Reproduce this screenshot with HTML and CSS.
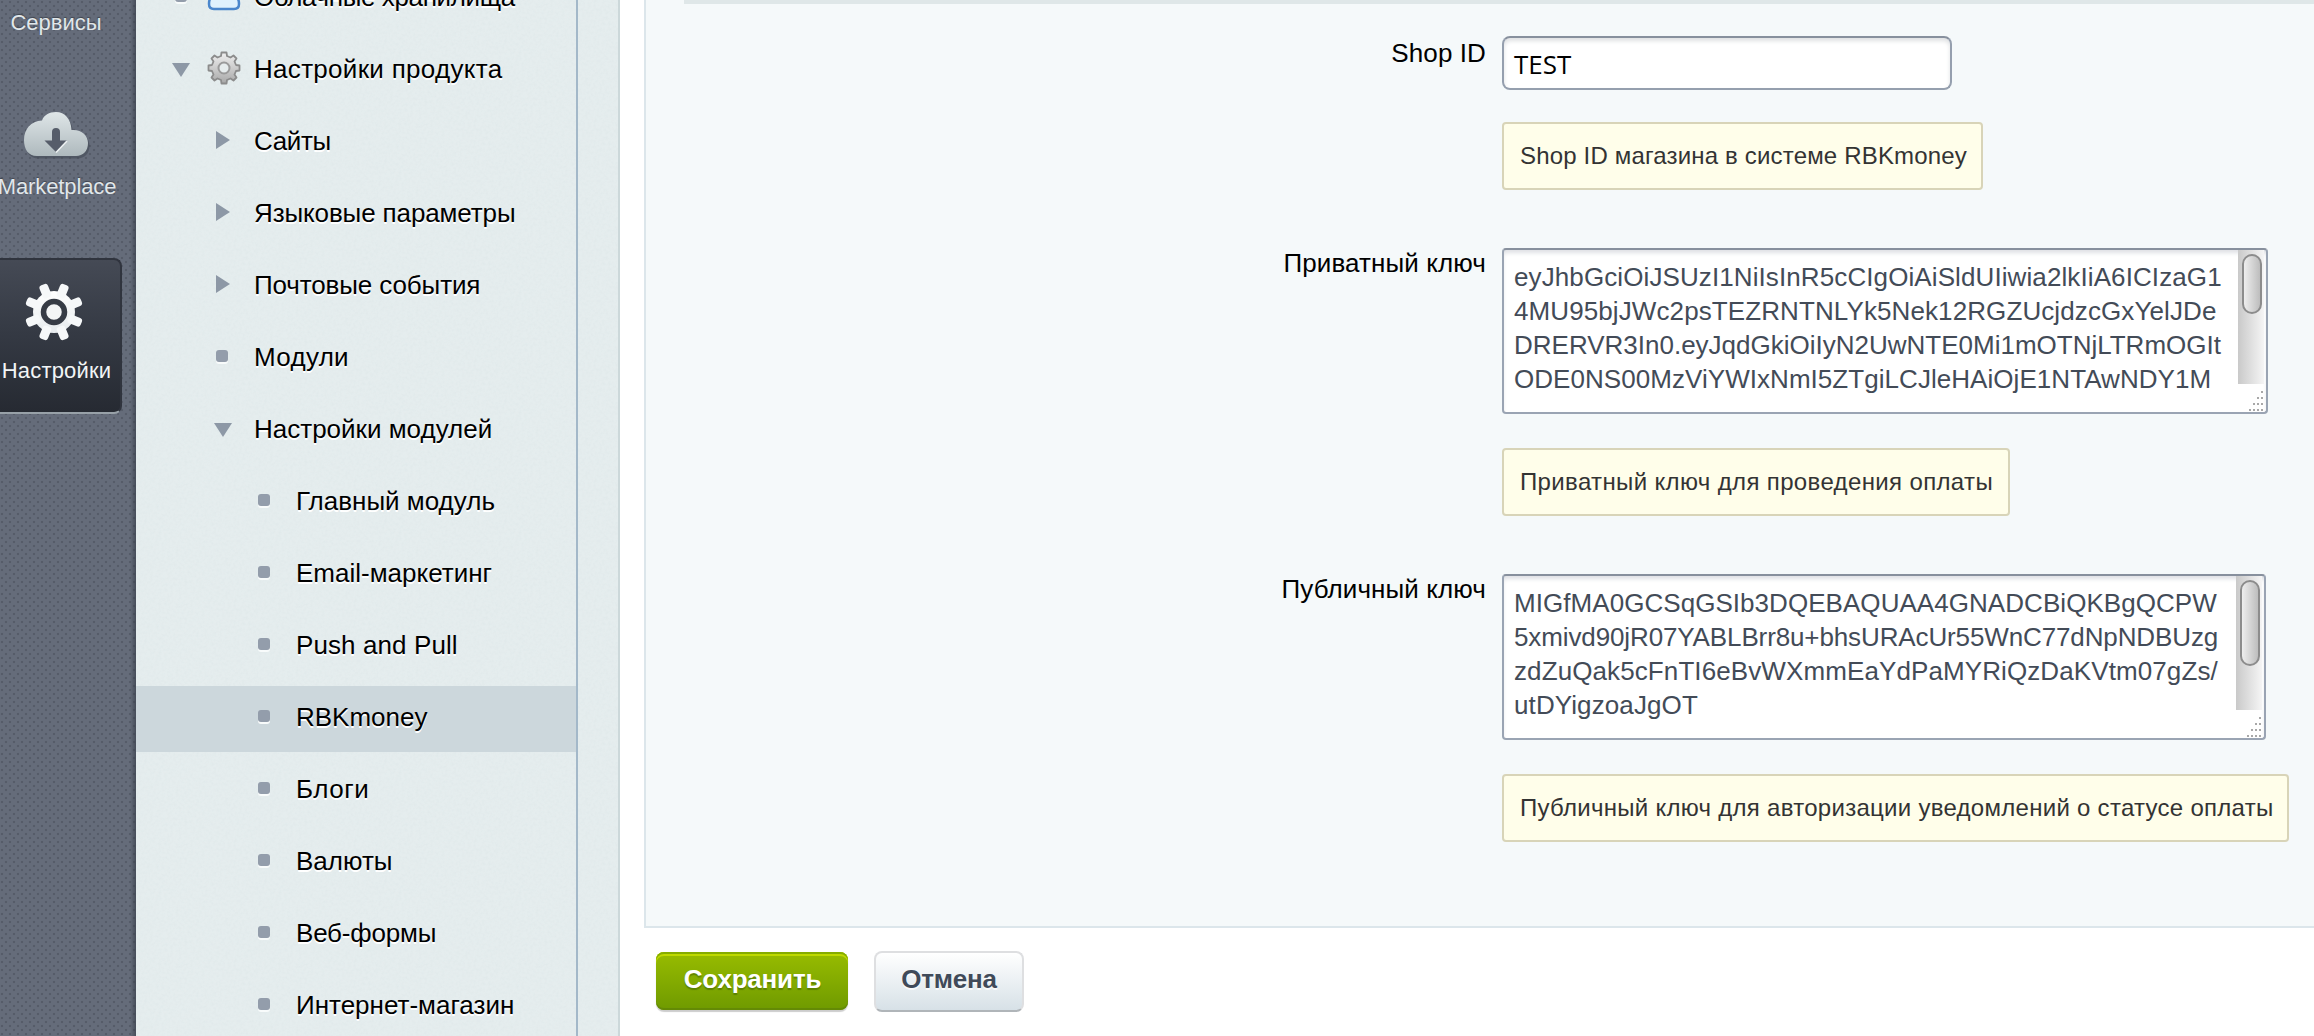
FILE: index.html
```html
<!DOCTYPE html>
<html lang="ru">
<head>
<meta charset="utf-8">
<title>RBKmoney</title>
<link rel="stylesheet" href="styles.css">
</head>
<body>
<svg class="defs" width="0" height="0" aria-hidden="true">
  <defs>
    <linearGradient id="cloudFill" x1="0" y1="0" x2="0" y2="1"><stop offset="0" stop-color="#dfe6e8"/><stop offset="1" stop-color="#aeb9bd"/></linearGradient>
    <linearGradient id="gearFill" x1="0" y1="0" x2="0" y2="1"><stop offset="0" stop-color="#ffffff"/><stop offset="1" stop-color="#e6eaed"/></linearGradient>
    <linearGradient id="grayGear" x1="0" y1="0" x2="0" y2="1"><stop offset="0" stop-color="#f0f0f0"/><stop offset="1" stop-color="#a8a8a8"/></linearGradient>
  </defs>
</svg>

<nav class="rail">
  <a class="rail-item services">Сервисы</a>
  <a class="rail-item market">
    <svg width="68" height="50" viewBox="0 0 68 50">
      <path d="M14 46C5 46 1 39 1 30C1 19 8 11 19 10.500C21 5 26 2 33 2C42 2 48 9 48.500 20C58 19 65 25 65 33C65 41 60 46 53 46Z" fill="#434955" opacity=".6" transform="translate(1.500 1.500)"/>
      <path d="M14 45C5 45 1 38 1 29C1 18 8 10 19 9.500C21 4 26 1 33 1C42 1 48 8 48.500 19C58 18 65 24 65 32C65 40 60 45 53 45Z" fill="url(#cloudFill)"/>
      <path d="M29 21Q29 17 33 17Q37 17 37 21V29.500H44L33 41L21.500 29.500H29Z" fill="#565d6a"/>
      <path d="M44 30L33 41.500" stroke="#eef2f3" stroke-width="1.500"/>
    </svg>
    Marketplace
  </a>
  <a class="rail-item settings active">
    <svg width="60" height="60" viewBox="-30 -30 60 60">
      <g fill="url(#gearFill)">
        <circle r="21"/>
        <g fill="#f6f8f9">
          <rect x="-4.500" y="-29.500" width="9" height="14" rx="3" transform="rotate(22.500)"/>
          <rect x="-4.500" y="-29.500" width="9" height="14" rx="3" transform="rotate(67.500)"/>
          <rect x="-4.500" y="-29.500" width="9" height="14" rx="3" transform="rotate(112.500)"/>
          <rect x="-4.500" y="-29.500" width="9" height="14" rx="3" transform="rotate(157.500)"/>
          <rect x="-4.500" y="-29.500" width="9" height="14" rx="3" transform="rotate(202.500)"/>
          <rect x="-4.500" y="-29.500" width="9" height="14" rx="3" transform="rotate(247.500)"/>
          <rect x="-4.500" y="-29.500" width="9" height="14" rx="3" transform="rotate(292.500)"/>
          <rect x="-4.500" y="-29.500" width="9" height="14" rx="3" transform="rotate(337.500)"/>
        </g>
      </g>
      <circle r="10.500" fill="#f3f5f6" stroke="#363b45" stroke-width="5.500"/>
    </svg>
    Настройки
  </a>
</nav>

<aside class="sidebar">
  <ul class="tree">
    <li class="l1 tight4"><i class="dot"></i>
      <svg class="icon" width="34" height="34" viewBox="0 0 34 34"><path d="M7 30Q2 30 2 25Q2 17 8 17Q9 8 18 8Q26 8 27 17Q32 18 32 25Q32 30 27 30Z" fill="#dff1fd" stroke="#4a86cc" stroke-width="2.500"/></svg>
      <span>Облачные хранилища</span></li>
    <li class="l1 wide3"><i class="down"></i>
      <svg class="icon" width="34" height="34" viewBox="-17 -17 34 34">
        <g fill="#d2d2d2" stroke="#8c8c8c" stroke-width="1.800">
          <path d="M-3-12L-2.500-15.500H2.500L3-12L6.500-10.500L9.500-12.500L12.500-9.500L10.500-6.500L12-3L15.500-2.500V2.500L12 3L10.500 6.500L12.500 9.500L9.500 12.500L6.500 10.500L3 12L2.500 15.500H-2.500L-3 12L-6.500 10.500L-9.500 12.500L-12.500 9.500L-10.500 6.500L-12 3L-15.500 2.500V-2.500L-12-3L-10.500-6.500L-12.500-9.500L-9.500-12.500L-6.500-10.500Z" fill="url(#grayGear)" stroke-linejoin="round"/>
          <circle r="5.500" fill="#e6eced" stroke="#9a9a9a" stroke-width="2"/>
        </g>
      </svg>
      <span>Настройки продукта</span></li>
    <li class="l2 tight4"><i class="right"></i><span>Сайты</span></li>
    <li class="l2 tight1"><i class="right"></i><span>Языковые параметры</span></li>
    <li class="l2 tight1"><i class="right"></i><span>Почтовые события</span></li>
    <li class="l2 wide3"><i class="dot"></i><span>Модули</span></li>
    <li class="l2"><i class="down"></i><span>Настройки модулей</span></li>
    <li class="l3"><i class="dot"></i><span>Главный модуль</span></li>
    <li class="l3"><i class="dot"></i><span>Email-маркетинг</span></li>
    <li class="l3 wide1"><i class="dot"></i><span>Push and Pull</span></li>
    <li class="l3 current"><i class="dot"></i><span>RBKmoney</span></li>
    <li class="l3 wide5"><i class="dot"></i><span>Блоги</span></li>
    <li class="l3"><i class="dot"></i><span>Валюты</span></li>
    <li class="l3 tight2"><i class="dot"></i><span>Веб-формы</span></li>
    <li class="l3"><i class="dot"></i><span>Интернет-магазин</span></li>
  </ul>
</aside>

<main class="content">
  <section class="panel">
    <div class="panel-rule"></div>
    <div class="row">
      <label class="label first">Shop ID</label>
      <div class="field">
        <div class="input">TEST</div>
        <div class="hint">Shop ID магазина в системе RBKmoney</div>
      </div>
    </div>
    <div class="row">
      <label class="label">Приватный ключ</label>
      <div class="field">
        <div class="textarea private">
          <div class="lines">
            <div class="wide1">eyJhbGciOiJSUzI1NiIsInR5cCIgOiAiSldUIiwia2lkIiA6ICIzaG1</div>
            <div class="wide1">4MU95bjJWc2psTEZRNTNLYk5Nek12RGZUcjdzcGxYelJDe</div>
            <div>DRERVR3In0.eyJqdGkiOiIyN2UwNTE0Mi1mOTNjLTRmOGIt</div>
            <div class="wide05">ODE0NS00MzViYWIxNmI5ZTgiLCJleHAiOjE1NTAwNDY1M</div>
          </div>
          <div class="side"><div class="track"><div class="thumb"></div></div>
            <svg class="grip" width="20" height="20"><g fill="#a8a8a8"><path d="M18 0h2v2h-2zM14 6h2v2h-2zM18 6h2v2h-2zM10 12h2v2h-2zM14 12h2v2h-2zM18 12h2v2h-2zM6 18h2v2h-2zM10 18h2v2h-2zM14 18h2v2h-2zM18 18h2v2h-2z"/></g></svg></div>
        </div>
        <div class="hint spaced">Приватный ключ для проведения оплаты</div>
      </div>
    </div>
    <div class="row">
      <label class="label">Публичный ключ</label>
      <div class="field">
        <div class="textarea public">
          <div class="lines">
            <div class="wide05">MIGfMA0GCSqGSIb3DQEBAQUAA4GNADCBiQKBgQCPW</div>
            <div class="tight1">5xmivd90jR07YABLBrr8u+bhsURAcUr55WnC77dNpNDBUzg</div>
            <div class="wide1">zdZuQak5cFnTI6eBvWXmmEaYdPaMYRiQzDaKVtm07gZs/</div>
            <div class="wide1">utDYigzoaJgOT</div>
          </div>
          <div class="side"><div class="track"><div class="thumb"></div></div>
            <svg class="grip" width="20" height="20"><g fill="#a8a8a8"><path d="M18 0h2v2h-2zM14 6h2v2h-2zM18 6h2v2h-2zM10 12h2v2h-2zM14 12h2v2h-2zM18 12h2v2h-2zM6 18h2v2h-2zM10 18h2v2h-2zM14 18h2v2h-2zM18 18h2v2h-2z"/></g></svg></div>
        </div>
        <div class="hint spaced long">Публичный ключ для авторизации уведомлений о статусе оплаты</div>
      </div>
    </div>
  </section>
  <div class="buttons">
    <button class="btn save">Сохранить</button>
    <button class="btn cancel">Отмена</button>
  </div>
</main>
</body>
</html>
```

FILE: styles.css
```css
* { box-sizing: border-box; }

body {
  margin: 0;
  height: 1036px;
  overflow: hidden;
  display: flex;
  background: #fff;
  color: #000;
  font: 26px/30px "Liberation Sans", Arial, sans-serif;
}

.defs { position: absolute; }

/* Left icon rail */
.rail {
  flex: none;
  width: 136px;
  height: 1036px;
  overflow: hidden;
  background:
    linear-gradient(to left, rgba(50, 56, 68, .6), rgba(50, 56, 68, 0) 6px),
    radial-gradient(circle at 2px 2px, #565c69 1.2px, transparent 1.6px) 0 0 / 8px 8px,
    radial-gradient(circle at 2px 2px, #565c69 1.2px, transparent 1.6px) 4px 4px / 8px 8px,
    #656c7a;
}

.rail-item {
  display: flex;
  flex-direction: column;
  align-items: center;
  width: 114px;
  font-size: 22px;
  line-height: 28px;
  color: #e1e7ea;
  text-shadow: 0 -1px 1px rgba(50, 55, 65, .7);
  white-space: nowrap;
}

.services { padding: 9px 2px 0 0; }
.market { padding-top: 74px; letter-spacing: -.12px; }
.market svg { margin-bottom: 12px; }

.settings {
  width: 122px;
  height: 156px;
  margin-top: 57px;
  padding: 24px 7px 0 0;
  letter-spacing: .2px;
  border: 2px solid #30343e;
  border-width: 2px 2px 2px 0;
  border-bottom-color: #98a1a8;
  border-radius: 0 8px 8px 0;
  background: linear-gradient(#454a55, #343943 50%, #262a32);
  color: #f2f5f6;
}
.settings svg { margin: -2px 5px 15px 0; }

/* Navigation tree */
.sidebar {
  flex: none;
  width: 484px;
  height: 1036px;
  border-right: 2px solid #ccd8da;
  padding-right: 40px;
  background:
    url("data:image/svg+xml,%3Csvg xmlns='http://www.w3.org/2000/svg' width='120' height='120'%3E%3Cfilter id='n'%3E%3CfeTurbulence type='fractalNoise' baseFrequency='.35' numOctaves='2' stitchTiles='stitch'/%3E%3CfeColorMatrix values='0 0 0 0 .6 0 0 0 0 .68 0 0 0 0 .7 1 0 0 0 -.35'/%3E%3C/filter%3E%3Crect width='120' height='120' filter='url(%23n)' opacity='.3'/%3E%3C/svg%3E"),
    #e5edee;
}

.tree {
  height: 1036px;
  margin: 0;
  padding: 0;
  overflow: hidden;
  list-style: none;
  border-right: 2px solid #a3b8c9;
}

.tree li {
  display: flex;
  align-items: center;
  height: 66px;
  margin-bottom: 6px;
  padding-bottom: 4px;
  white-space: nowrap;
  text-shadow: 0 2px 0 #fff;
}
.tree li:first-child { margin-top: -34px; }
.tree .current { background: #ccd7dc; }

.tree .l1 { padding-left: 36px; }
.tree .l2 { padding-left: 78px; }
.tree .l3 { padding-left: 122px; }

.tree i {
  flex: none;
  margin-bottom: 2px;
}
.dot {
  width: 12px;
  height: 12px;
  margin-right: 26px;
  border-radius: 3px;
  background: #939dab;
  box-shadow: 0 2px 0 #f8fbfb;
}
.l2 .dot { margin-left: 2px; margin-right: 26px; }
.l1 .dot { margin-left: 3px; margin-right: 20px; }
.right {
  width: 14px;
  height: 18px;
  margin: 0 24px 0 2px;
  background: #8d98a6;
  clip-path: polygon(0 0, 100% 50%, 0 100%);
}
.down {
  width: 18px;
  height: 14px;
  margin-right: 22px;
  background: #8d98a6;
  clip-path: polygon(0 0, 100% 0, 50% 100%);
}
.tree .down { margin-bottom: -2px; }
.l1 .down { margin-right: 17px; }
.icon { flex: none; margin: 0 13px 2px 0; }

.tight4 { letter-spacing: -.38px; }
.tight2 { letter-spacing: -.2px; }
.tight1 { letter-spacing: -.12px; }
.wide05 { letter-spacing: .05px; }
.wide1 { letter-spacing: .1px; }
.wide3 { letter-spacing: .3px; }
.wide5 { letter-spacing: .5px; }

/* Settings form */
.content {
  flex: 1;
  min-width: 0;
  padding-left: 24px;
}

.panel {
  height: 928px;
  border: 2px solid #dce6eb;
  border-width: 0 0 2px 2px;
  background: #f5f9fa;
  overflow: hidden;
}
.panel-rule {
  height: 4px;
  margin: 0 0 32px 38px;
  background: #dfe7e8;
}

.row {
  display: flex;
  gap: 16px;
  margin-bottom: 58px;
}
.label {
  flex: none;
  width: 840px;
  text-align: right;
  letter-spacing: .1px;
}
.label.first { padding-top: 2px; }

.input {
  width: 450px;
  height: 54px;
  padding: 5px 10px 0;
  border: 2px solid #959fae;
  border-top-color: #87909d;
  border-radius: 8px;
  background: #fff;
  box-shadow: inset 0 3px 4px #dfe1e3;
  font: 26px/42px "Open Sans", sans-serif;
}

.hint {
  width: max-content;
  margin-top: 32px;
  padding: 18px 14px 18px 16px;
  border: 2px solid #d8d4b8;
  border-radius: 4px;
  background: #fffeea;
  color: #333;
  font-size: 24px;
  line-height: 28px;
  letter-spacing: .17px;
  white-space: nowrap;
}
.hint.spaced { margin-top: 34px; padding-right: 15px; letter-spacing: .36px; }
.hint.long { padding-right: 14px; letter-spacing: .28px; }

.textarea {
  display: flex;
  justify-content: space-between;
  width: 766px;
  height: 166px;
  padding-right: 2px;
  border: 2px solid #9aa4b3;
  border-top-color: #87909d;
  border-radius: 4px;
  background: #fff;
  box-shadow: inset 0 4px 4px -1px #dfe1e5;
}
.textarea.public { width: 764px; }
.lines {
  padding: 10px 0 0 10px;
  color: #434b57;
  line-height: 34px;
  white-space: nowrap;
}
.side {
  width: 26px;
}
.track {
  height: 134px;
  padding: 4px 2px 0 4px;
  background: linear-gradient(to right, #c9c9c9, #f5f5f5);
}
.thumb {
  width: 20px;
  height: 60px;
  border: 2px solid #8c8c8c;
  border-radius: 10px;
  background: linear-gradient(to right, #eee, #bdbdbd);
}
.public .thumb { height: 86px; }
.grip { display: block; margin: 7px 0 0 5px; }

.buttons {
  display: flex;
  gap: 26px;
  padding: 23px 0 0 12px;
}
.btn {
  height: 61px;
  padding: 0 0 5px;
  border: 0;
  border-radius: 8px;
  font: bold 26px/30px "Liberation Sans", Arial, sans-serif;
}
.save {
  width: 192px;
  height: 58px;
  margin-top: 1px;
  padding: 0 0 4px 1px;
  letter-spacing: -.2px;
  color: #fff;
  background: linear-gradient(#98bc00, #6f9a00);
  box-shadow: 0 2px 1px rgba(0, 0, 0, .2), inset 0 2px 0 #86ac00, inset 0 4px 0 #bfd900, inset 0 -2px 0 #648a05;
  text-shadow: 0 2px 1px rgba(70, 105, 0, .6);
}
.cancel {
  width: 150px;
  letter-spacing: -.2px;
  color: #404a59;
  background: linear-gradient(#fff, #d7e1e7);
  border: 2px solid #dedfe1;
  border-bottom-color: #b0b5b9;
  text-shadow: 0 2px 0 rgba(255, 255, 255, .7);
}
```
